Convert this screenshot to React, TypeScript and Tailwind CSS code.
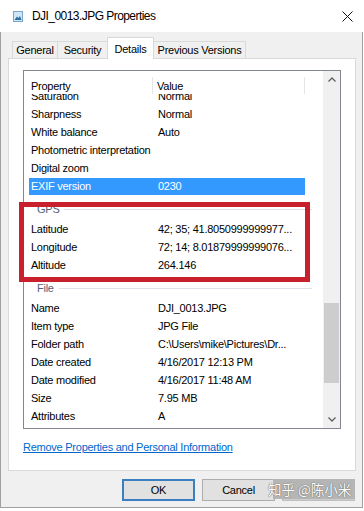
import React from "react";

const rowsTop: [string, string][] = [
  ["Sharpness", "Normal"],
  ["White balance", "Auto"],
  ["Photometric interpretation", ""],
  ["Digital zoom", ""],
];

const gps: [string, string][] = [
  ["Latitude", "42; 35; 41.8050999999977..."],
  ["Longitude", "72; 14; 8.01879999999076..."],
  ["Altitude", "264.146"],
];

const file: [string, string][] = [
  ["Name", "DJI_0013.JPG"],
  ["Item type", "JPG File"],
  ["Folder path", "C:\\Users\\mike\\Pictures\\Dr..."],
  ["Date created", "4/16/2017 12:13 PM"],
  ["Date modified", "4/16/2017 11:48 AM"],
  ["Size", "7.95 MB"],
  ["Attributes", "A"],
];

function Row({ p, v, cls = "" }: { p: string; v: string; cls?: string }) {
  return (
    <div className={`flex h-[18px] shrink-0 items-center whitespace-nowrap ${cls}`}>
      <div className="w-[129px] pl-[7px] overflow-hidden">{p}</div>
      <div className="w-[151px] pl-[5px] overflow-hidden">{v}</div>
    </div>
  );
}

function Group({ name }: { name: string }) {
  return (
    <div className="flex h-[25px] shrink-0 pt-[5px]">
      <div className="flex h-[18px] flex-1 items-center pl-[13px] pr-[11px]">
        <span className="text-[#55607a]">{name}</span>
        <div className="ml-[5px] h-px flex-1 bg-[#dfe0ea]" />
      </div>
    </div>
  );
}

export default function App() {
  return (
    <div className="relative h-[511px] w-[364px] overflow-hidden bg-white font-['Liberation_Sans',Arial,sans-serif] text-[11px] leading-[18px] tracking-[-0.25px] text-black">
      <div className="flex h-[508px] w-[363px] flex-col">
        {/* Title bar */}
        <div className="flex h-[32px] shrink-0 items-center bg-white">
          <svg className="ml-[13px]" width="10" height="11" viewBox="0 0 10 11">
            <rect x="0.5" y="0.5" width="9" height="10" fill="#cfe6f7" stroke="#7aa6cc" />
            <path d="M1.5 9 L4 5.5 L5.5 7 L7 5 L8.5 9 Z" fill="#2f6ea5" />
          </svg>
          <span className="ml-[9px] text-[12px] tracking-[-0.55px]">DJI_0013.JPG Properties</span>
          <div className="flex-1" />
          <svg className="mr-[10px]" width="11" height="11" viewBox="0 0 11 11">
            <path d="M0.5 0.5 L10.5 10.5 M10.5 0.5 L0.5 10.5" stroke="#111" strokeWidth="1" />
          </svg>
        </div>

        {/* Body */}
        <div className="flex flex-1 flex-col border-x border-b border-[#a0a0a0] bg-[#f0f0f0] pl-[7px]">
          {/* Tabs */}
          <div className="flex h-[26px] items-end pl-[4px]">
            <div className="flex h-[17px] w-[46px] items-center justify-center border border-b-0 border-[#d9d9d9] bg-[#f0f0f0]">General</div>
            <div className="-ml-px flex h-[17px] w-[51px] items-center justify-center border border-b-0 border-[#d9d9d9] bg-[#f0f0f0]">Security</div>
            <div className="relative z-10 -mb-px -ml-px flex h-[22px] w-[47px] items-center justify-center border border-b-0 border-[#d9d9d9] bg-white">Details</div>
            <div className="-ml-px flex h-[17px] w-[93px] items-center justify-center border border-b-0 border-[#d9d9d9] bg-[#f0f0f0]">Previous Versions</div>
          </div>

          {/* Panel */}
          <div className="flex h-[413px] w-[348px] flex-col border border-[#d9d9d9] bg-white pl-[14px] pt-[11px]">
            {/* Listview */}
            <div className="flex h-[359px] w-[318px] border border-[#828790]">
              <div className="flex w-[299px] flex-col">
                <div className="flex h-[23px] shrink-0 pt-[6px]">
                  <div className="h-[17px] w-[129px] border-r border-[#e5e5e5] pl-[7px]">Property</div>
                  <div className="h-[17px] w-[152px] border-r border-[#e5e5e5] pl-[4px]">Value</div>
                </div>
                <div className="flex flex-1 flex-col overflow-hidden">
                  <Row p="Saturation" v="Normal" cls="-mt-[7px]" />
                  {rowsTop.map(([p, v]) => (
                    <Row key={p} p={p} v={v} />
                  ))}
                  <div className="relative flex h-[18px] shrink-0 items-center whitespace-nowrap text-white">
                    <div className="absolute bottom-0 left-[5px] top-px w-[276px] bg-[#3399ff]" />
                    <div className="relative w-[129px] pl-[7px]">EXIF version</div>
                    <div className="relative w-[151px] pl-[5px]">0230</div>
                  </div>
                  <Group name="GPS" />
                  {gps.map(([p, v]) => (
                    <Row key={p} p={p} v={v} />
                  ))}
                  <Group name="File" />
                  {file.map(([p, v]) => (
                    <Row key={p} p={p} v={v} />
                  ))}
                </div>
              </div>
              {/* Scrollbar */}
              <div className="flex w-[17px] flex-col bg-[#f0f0f0]">
                <div className="flex h-[17px] items-center justify-center">
                  <svg width="8" height="5" viewBox="0 0 8 5">
                    <path d="M0.5 4.5 L4 1 L7.5 4.5" stroke="#606060" strokeWidth="1.3" fill="none" />
                  </svg>
                </div>
                <div className="flex-1">
                  <div className="mx-px mt-[215px] h-[80px] bg-[#cdcdcd]" />
                </div>
                <div className="flex h-[17px] items-center justify-center">
                  <svg width="8" height="5" viewBox="0 0 8 5">
                    <path d="M0.5 0.5 L4 4 L7.5 0.5" stroke="#606060" strokeWidth="1.3" fill="none" />
                  </svg>
                </div>
              </div>
            </div>
            <div className="mt-[12px] leading-[13px]">
              <span className="text-[#0066cc] underline decoration-[#0066cc]">Remove Properties and Personal Information</span>
            </div>
          </div>

          {/* Buttons */}
          <div className="mt-[8px] flex gap-[7px] pl-[114px]">
            <div className="flex h-[22px] w-[73px] items-center justify-center border-2 border-[#3a7fbf] bg-[#e1e1e1]">OK</div>
            <div className="flex h-[22px] w-[73px] items-center justify-center border border-[#adadad] bg-[#e1e1e1]">Cancel</div>
            <div className="flex h-[22px] w-[73px] items-center justify-center border border-[#bfbfbf] bg-[#cccccc] text-[#a0a0a0]">Apply</div>
          </div>
        </div>
      </div>

      {/* Red annotation box */}
      <div className="absolute left-[19px] top-[202px] h-[80px] w-[291px] border-[5px] border-[#c8202c]" />

      {/* Watermark */}
      <div className="absolute left-[273px] top-[479px] h-[20px] w-[82px] bg-[#b5b5b5]" />
      <div className="absolute left-[268px] top-[479px] flex h-[20px] items-center whitespace-nowrap font-['Noto_Sans_CJK_SC',sans-serif] text-[13.5px] leading-[20px] tracking-normal text-white [text-shadow:0_0_1px_#666,0_0_1px_#666]">
        知乎 @陈小米
      </div>
    </div>
  );
}
